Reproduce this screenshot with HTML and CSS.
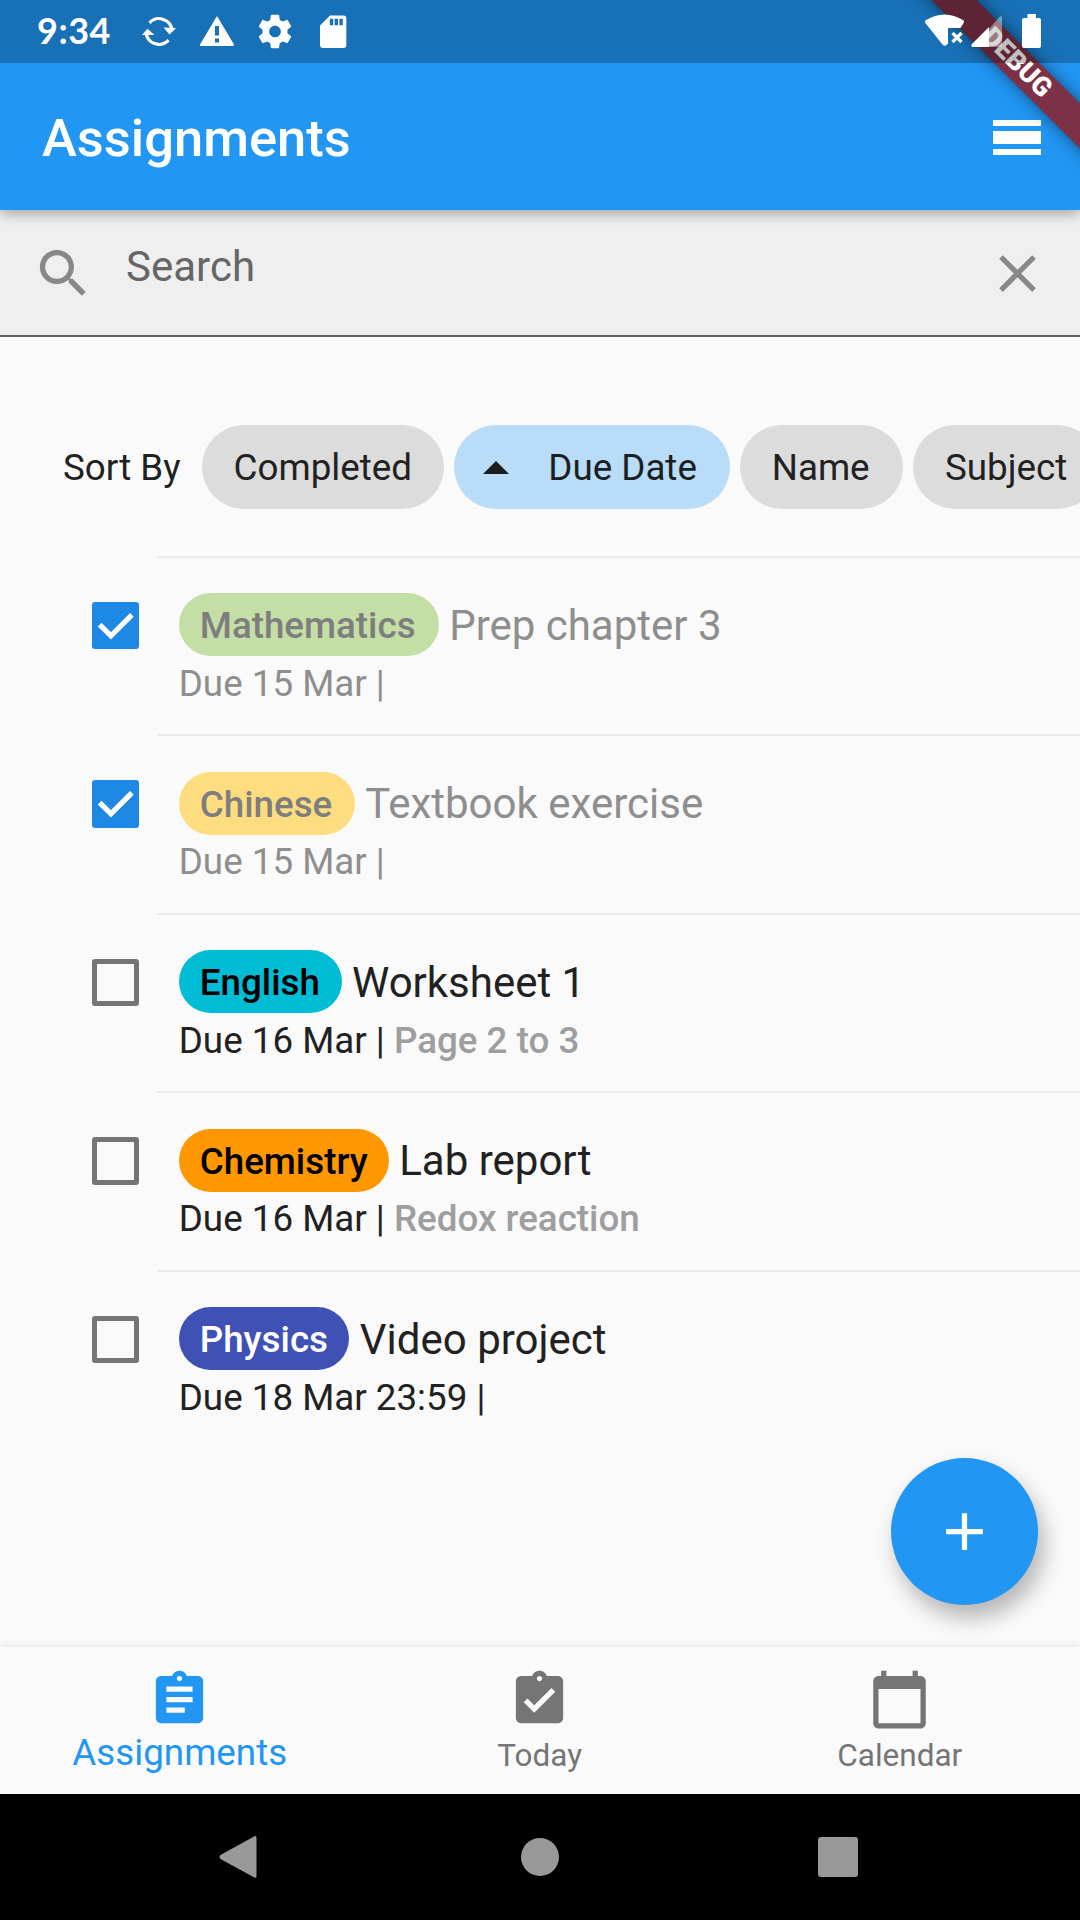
FILE: index.html
```html
<!DOCTYPE html>
<html lang="en">
<head>
<meta charset="utf-8">
<title>Assignments</title>
<link rel="stylesheet" href="styles.css">
</head>
<body>
<div class="screen">
  <div class="status">
    <span class="clock">9:34</span>
    <svg class="status-left" viewBox="136 0 220 63" width="220" height="63">
      <g fill="none" stroke="#fff" stroke-width="3.2">
        <path d="M149.500 22.800A13 13 0 0 1 172 31"/>
        <path d="M168.500 40.200A13 13 0 0 1 146 32"/>
      </g>
      <path d="M163.500 27.500L176 28L169.500 34.500Z M142 35L147.500 28.800L154.500 35Z"/>
      <path d="M217 16L234 44.500Q234 46 232.500 46H201Q199.500 46 200 44.500Z"/>
      <path fill="#1a70b6" d="M215 26h4v9.500h-4zM215 38.500h4v4h-4z"/>
      <svg x="255" y="11.500" width="40" height="40" viewBox="0 0 24 24"><path d="M19.430 12.980c.04-.32.07-.64.07-.98s-.03-.66-.07-.98l2.110-1.650c.19-.15.24-.42.12-.64l-2-3.460c-.12-.22-.39-.3-.61-.22l-2.490 1c-.52-.4-1.080-.73-1.690-.98l-.38-2.650C14.460 2.180 14.250 2 14 2h-4c-.25 0-.46.18-.49.42l-.38 2.650c-.61.25-1.170.59-1.690.98l-2.490-1c-.23-.09-.49 0-.61.22l-2 3.460c-.13.22-.07.49.12.64l2.110 1.650c-.04.32-.07.65-.07.98s.03.66.07.98l-2.110 1.650c-.19.15-.24.42-.12.64l2 3.460c.12.22.39.3.61.22l2.490-1c.52.4 1.080.73 1.690.98l.38 2.650c.03.24.24.42.49.42h4c.25 0 .46-.18.49-.42l.38-2.650c.61-.25 1.170-.59 1.690-.98l2.490 1c.23.09.49 0 .61-.22l2-3.460c.12-.22.07-.49-.12-.64l-2.110-1.650zM12 15.500c-1.930 0-3.500-1.570-3.500-3.500s1.570-3.500 3.500-3.500 3.500 1.570 3.500 3.500-1.570 3.500-3.500 3.500z"/></svg>
      <path d="M330 15.500H343.500Q346.300 15.500 346.300 18.500V45Q346.300 48 343.500 48H323Q320 48 320 45V25.500Z"/>
      <path fill="#1a70b6" d="M329.800 18.700h3.400v6.600h-3.400zM334.600 18.700h3.400v6.600h-3.400zM339.400 18.700h3.400v6.600h-3.400z"/>
    </svg>
    <svg class="status-right" viewBox="920 0 130 63" width="130" height="63">
      <path d="M925.300 20.500Q944.500 8.500 963.800 20.500Q964.500 22 963 24L960.500 28H948V43.500Q945 47.500 942.500 44.500L925.300 23Q924.500 21.500 925.300 20.500Z"/>
      <path fill="none" stroke="#fff" stroke-width="3.200" d="M952.500 33L961.500 42M961.500 33L952.500 42"/>
      <path fill-opacity=".4" d="M989 29L1000 16.500Q1002 15.500 1002 17.500V47H989Z"/>
      <path d="M989 27V47H972Q970.500 46 972 44Z"/>
      <path d="M1027.500 14H1036V18H1039Q1041 18 1041 20V46Q1041 48 1039 48H1024Q1022 48 1022 46V20Q1022 18 1024 18H1027.500Z"/>
    </svg>
  </div>
  <header class="appbar">
    <h1 class="title">Assignments</h1>
    <div class="menu"><i></i><i class="thick"></i><i></i></div>
  </header>
  <div class="banner"><span>DEBUG</span></div>
  <div class="search">
    <svg class="ico" viewBox="0 0 24 24"><path d="M15.500 14h-.79l-.28-.27C15.410 12.590 16 11.110 16 9.500 16 5.910 13.090 3 9.500 3S3 5.910 3 9.500 5.910 16 9.500 16c1.610 0 3.090-.59 4.230-1.570l.27.28v.79l5 4.990L20.490 19l-4.990-5zm-6 0C7.010 14 5 11.990 5 9.500S7.010 5 9.500 5 14 7.010 14 9.500 11.990 14 9.500 14z"/></svg>
    <span class="hint">Search</span>
    <svg class="ico" viewBox="0 0 24 24"><path d="M19 6.410L17.590 5 12 10.590 6.410 5 5 6.410 10.590 12 5 17.590 6.410 19 12 13.410 17.590 19 19 17.590 13.410 12z"/></svg>
  </div>
  <div class="sort">
    <span class="sort-label">Sort By</span>
    <span class="chip by-completed">Completed</span>
    <span class="chip by-due on"><i class="arrow"></i>Due Date</span>
    <span class="chip by-name">Name</span>
    <span class="chip">Subject</span>
  </div>
  <main class="list">
    <div class="item done">
      <svg class="box checked" viewBox="0 0 18 18"><path d="M2.900 8.600L7.200 12.900L15.200 4.900"/></svg>
      <div class="body">
        <div class="line"><span class="tag math">Mathematics</span><span class="name">Prep chapter 3</span></div>
        <div class="due">Due 15 Mar |</div>
      </div>
    </div>
    <div class="item done">
      <svg class="box checked" viewBox="0 0 18 18"><path d="M2.900 8.600L7.200 12.900L15.200 4.900"/></svg>
      <div class="body">
        <div class="line"><span class="tag chinese">Chinese</span><span class="name">Textbook exercise</span></div>
        <div class="due">Due 15 Mar |</div>
      </div>
    </div>
    <div class="item">
      <span class="box"></span>
      <div class="body">
        <div class="line"><span class="tag english">English</span><span class="name">Worksheet 1</span></div>
        <div class="due">Due 16 Mar | <b>Page 2 to 3</b></div>
      </div>
    </div>
    <div class="item">
      <span class="box"></span>
      <div class="body">
        <div class="line"><span class="tag chem">Chemistry</span><span class="name">Lab report</span></div>
        <div class="due">Due 16 Mar | <b>Redox reaction</b></div>
      </div>
    </div>
    <div class="item">
      <span class="box"></span>
      <div class="body">
        <div class="line"><span class="tag physics">Physics</span><span class="name">Video project</span></div>
        <div class="due">Due 18 Mar 23:59 |</div>
      </div>
    </div>
  </main>
  <div class="fab"><svg class="ico" viewBox="0 0 24 24"><path d="M19 13h-6v6h-2v-6H5v-2h6V5h2v6h6v2z"/></svg></div>
  <nav class="tabs">
    <div class="tab active">
      <svg class="ico" viewBox="0 0 24 24"><path d="M19 3h-4.180C14.400 1.840 13.300 1 12 1c-1.300 0-2.400.84-2.820 2H5c-1.100 0-2 .9-2 2v14c0 1.100.9 2 2 2h14c1.100 0 2-.9 2-2V5c0-1.100-.9-2-2-2zm-7 0c.55 0 1 .45 1 1s-.45 1-1 1-1-.45-1-1 .45-1 1-1zm2 14H7v-2h7v2zm3-4H7v-2h10v2zm0-4H7V7h10v2z"/></svg>
      <span>Assignments</span>
    </div>
    <div class="tab">
      <svg class="ico" viewBox="0 0 24 24"><path d="M19 3h-4.180C14.400 1.840 13.300 1 12 1c-1.300 0-2.400.84-2.820 2H5c-1.100 0-2 .9-2 2v14c0 1.100.9 2 2 2h14c1.100 0 2-.9 2-2V5c0-1.100-.9-2-2-2zm-7 0c.55 0 1 .45 1 1s-.45 1-1 1-1-.45-1-1 .45-1 1-1zm-2 14l-4-4 1.410-1.410L10 14.170l6.590-6.590L18 9l-8 8z"/></svg>
      <span>Today</span>
    </div>
    <div class="tab">
      <svg class="ico" viewBox="0 0 24 24"><path d="M20 3h-1V1h-2v2H7V1H5v2H4c-1.100 0-2 .9-2 2v16c0 1.100.9 2 2 2h16c1.100 0 2-.9 2-2V5c0-1.100-.9-2-2-2zm0 18H4V8h16v13z"/></svg>
      <span>Calendar</span>
    </div>
  </nav>
  <footer class="sysnav">
    <svg width="43" height="44" viewBox="0 0 43 44"><path d="M36.500 1.200Q38.500 0.500 38.500 3V41Q38.500 43.500 36.300 42.500L2.500 24Q0.500 22 2.500 20Z"/></svg>
    <svg width="40" height="40" viewBox="0 0 40 40"><circle cx="20" cy="20" r="19"/></svg>
    <svg width="40" height="40" viewBox="0 0 40 40"><rect width="40" height="40" rx="3"/></svg>
  </footer>
</div>
</body>
</html>
```
FILE: styles.css
```css
* { box-sizing: border-box; }
body { margin: 0; background: #fafafa; font-family: Roboto, sans-serif; color: #212121; }
.screen { position: relative; width: 1080px; height: 1920px; overflow: hidden; display: flex; flex-direction: column; background: #fafafa; }

/* System status bar: a translucent shade over the app bar colour */
.status { position: absolute; top: 0; left: 0; z-index: 3; width: 1080px; height: 63px; display: flex; align-items: center; padding: 0 30px 0 37px; background: rgba(0, 0, 0, .25); }
.status svg { fill: #fff; }
.clock { width: 99px; color: #fff; font-family: Lato, sans-serif; font-weight: 700; font-size: 36px; line-height: 60px; height: 63px; letter-spacing: .5px; }
.status-right { margin-left: auto; }

.appbar { flex: none; position: relative; z-index: 1; height: 210px; padding: 65px 39px 0 42px; display: flex; align-items: center; justify-content: space-between; background: #2196f3; box-shadow: 0 6px 11px -1px rgba(0, 0, 0, .28); }
.title { margin: 0; color: #fff; font-weight: 500; font-size: 52.5px; line-height: 62px; }
.menu { width: 48px; display: flex; flex-direction: column; gap: 5px; }
.menu i { height: 5.7px; background: #fff; }
.menu .thick { height: 13.6px; }

/* Corner ribbon */
.banner { position: absolute; z-index: 2; left: 867px; top: 47px; width: 300px; height: 31.5px; transform: rotate(45deg); background: #7c3147; box-shadow: 0 0 16px rgba(0, 0, 0, .5); text-align: center; }
.banner span { display: block; color: #fff; font-weight: 900; font-size: 26.8px; line-height: 31.5px; }

.ico { flex: none; width: 63px; height: 63px; }
.search { flex: none; height: 127px; padding: 2px 31.500px 0; display: flex; align-items: center; background: #efefef; border-bottom: 2.600px solid #616161; }
.search .ico { fill: #888; }
.hint { flex: 1; padding: 0 0 13px 31.5px; color: #666; font-size: 42px; line-height: 50px; }

.sort { flex: none; height: 218.700px; padding: 88px 0 0 63px; display: flex; align-items: flex-start; gap: 10.5px; font-size: 36.75px; line-height: 86px; white-space: nowrap; }
.sort-label { flex: none; width: 128.600px; }
.chip { flex: none; height: 84px; padding: 2px 0 0 31.5px; display: flex; align-items: center; border-radius: 42px; background: #dcdcdc; }
.chip:last-child { padding-right: 32px; }
.by-completed { width: 241.500px; }
.by-due { width: 275.600px; }
.by-name { width: 162.750px; }
.chip.on { background: #b9dcf8; color: #1b1f22; }
.arrow { width: 0; height: 0; margin: -2px 39.200px 0 -2.500px; border: 13px solid transparent; border-top: 0; border-bottom-color: #1b1f22; }

.list { flex: 1; }
.item { height: 178.5px; display: flex; align-items: flex-start; padding: 46.100px 0 0 92px; background: linear-gradient(#eaeaea, #eaeaea) 157px 0 / 923px 2px no-repeat; }
.box { flex: none; width: 47.25px; height: 47.25px; border: 5.250px solid #757575; border-radius: 3px; }
.box.checked { border: 0; background: #1e88e5; fill: none; stroke: #fff; stroke-width: 2; }
.body { margin: -8.400px 0 0 39.5px; }
.line { display: flex; align-items: center; gap: 10.5px; height: 63px; }
.tag { height: 63px; padding-left: 21px; border-radius: 31.5px; font-weight: 500; font-size: 36.75px; line-height: 65px; color: #000; }
.name { padding-top: 1.400px; font-size: 42px; line-height: 50px; }
.due { margin-top: 5.300px; font-size: 36.75px; line-height: 43px; }
.due b { font-weight: 500; color: #9e9e9e; }
.done .name, .done .due { color: #8e8e8e; }
.done .tag { color: #7e7e7e; }
.math { width: 259.900px; background: #c4dfa5; }
.chinese { width: 175.900px; background: #fedd81; }
.english { width: 162.750px; background: #00bcd4; }
.chem { width: 210px; background: #ff9800; }
.physics { width: 170.600px; background: #3f51b5; color: #fff; }

.fab { position: absolute; left: 891px; top: 1458px; z-index: 2; width: 147px; height: 147px; border-radius: 50%; display: grid; place-items: center; background: #2196f3; box-shadow: 6px 13px 22px rgba(0, 0, 0, .28); }
.fab svg { fill: #fff; }

.tabs { flex: none; z-index: 1; height: 147px; display: grid; grid-template-columns: repeat(3, 1fr); background: #fafafa; box-shadow: 0 -1px 8px rgba(0, 0, 0, .09); }
.tab { display: flex; flex-direction: column; align-items: center; padding-top: 21px; color: #757575; fill: #757575; font-size: 31.5px; }
.tab .ico { margin-left: -.5px; }
.tab span { margin: 5px 0 0 -.5px; line-height: 40px; }
.tab.active { color: #2196f3; fill: #2196f3; font-size: 36.75px; }
.tab.active span { margin-top: 2px; }

.sysnav { flex: none; height: 126px; padding: 0 222px 0 218px; display: flex; align-items: center; justify-content: space-between; background: #000; fill: #999; }
```
